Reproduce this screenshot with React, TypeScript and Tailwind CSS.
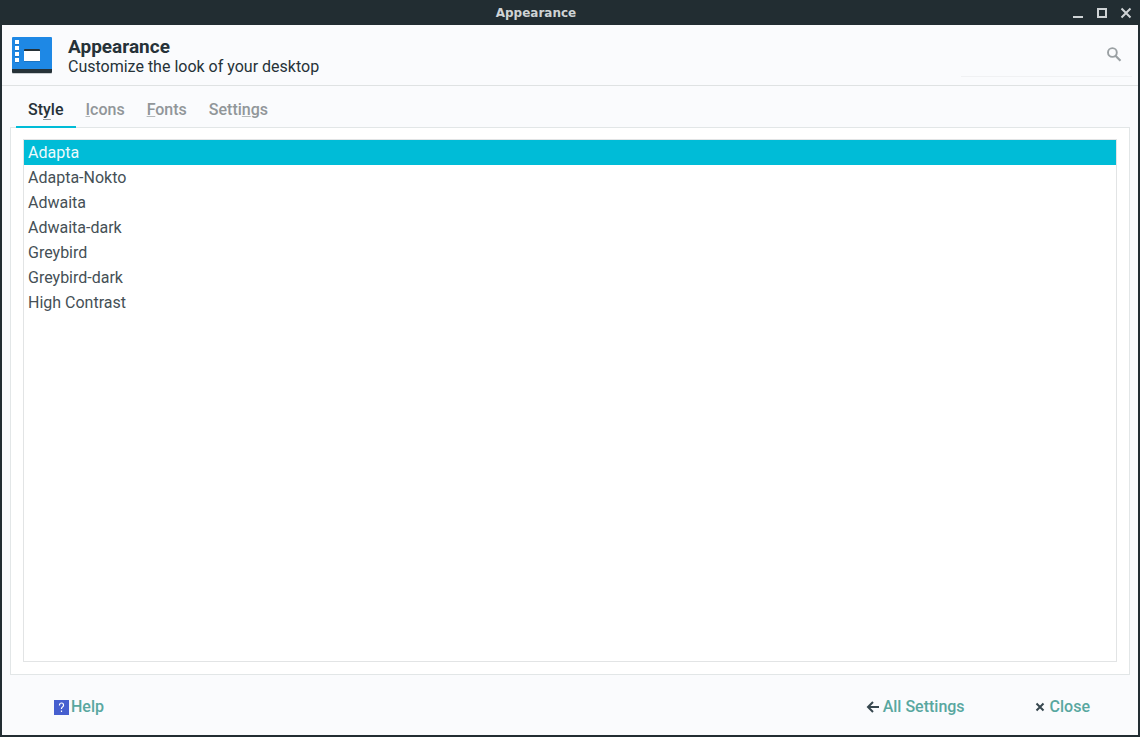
import React, { useState } from 'react';

const tabs = [
  { id: 'style', before: 'St', key: 'y', after: 'le' },
  { id: 'icons', before: '', key: 'I', after: 'cons' },
  { id: 'fonts', before: '', key: 'F', after: 'onts' },
  { id: 'settings', before: 'Setti', key: 'n', after: 'gs' },
];

const themes = [
  'Adapta',
  'Adapta-Nokto',
  'Adwaita',
  'Adwaita-dark',
  'Greybird',
  'Greybird-dark',
  'High Contrast',
];

function TitleBar() {
  return (
    <div className="grid h-[25px] shrink-0 grid-cols-[1fr_auto_1fr] items-center bg-[#222d32] px-1.5 text-[#cfd3d5]">
      <span />
      <span className="pt-px pr-[68px] font-['DejaVu_Sans'] text-[12px] leading-6 font-bold">Appearance</span>
      <div className="flex justify-end gap-2">
        <button type="button" aria-label="Minimize" className="size-4">
          <svg viewBox="0 0 16 16" className="size-4" shapeRendering="crispEdges">
            <rect x="3" y="11" width="10" height="2" fill="currentColor" />
          </svg>
        </button>
        <button type="button" aria-label="Maximize" className="size-4">
          <svg viewBox="0 0 16 16" className="size-4" shapeRendering="crispEdges">
            <path d="M3 3h10v10H3zM5 5v6h6V5z" fill="currentColor" fillRule="evenodd" />
          </svg>
        </button>
        <button type="button" aria-label="Close window" className="size-4">
          <svg viewBox="0 0 16 16" className="size-4">
            <path d="M3.5 3.5l9 9M12.5 3.5l-9 9" stroke="currentColor" strokeWidth="2" />
          </svg>
        </button>
      </div>
    </div>
  );
}

function AppearanceIcon() {
  return (
    <svg viewBox="0 0 40 37" width="40" height="37" aria-hidden="true">
      <rect x="0" y="3" width="40" height="34" rx="1" fill="#c9cdd0" />
      <rect x="0" y="2" width="40" height="34" rx="1" fill="#263238" />
      <path d="M1 0h38a1 1 0 0 1 1 1v31H0V1a1 1 0 0 1 1-1z" fill="#1e88e5" />
      <path d="M3 4h4v4H3zM3 10h4v4H3zM3 16h4v4H3zM3 22h4v4H3z" fill="#1a74c4" />
      <path d="M3 3h4v4H3zM3 9h4v4H3zM3 15h4v4H3zM3 21h4v4H3z" fill="#fff" />
      <rect x="12" y="13" width="16" height="12" fill="#1a74c4" />
      <rect x="12" y="12" width="16" height="3" rx="1" fill="#263238" />
      <rect x="12" y="14" width="16" height="10" fill="#fff" />
    </svg>
  );
}

function Header() {
  return (
    <header className="flex h-[61px] shrink-0 items-center border-b border-[#dfe2e3] pr-1.5 pl-2.5">
      <AppearanceIcon />
      <div className="ml-4 pt-[3px]">
        <h1 className="text-[19px] leading-5 font-bold">Appearance</h1>
        <p className="leading-5">Customize the look of your desktop</p>
      </div>
      <label className="mb-2 ml-auto flex h-11 w-[171px] items-center self-end border-b border-[#f0f1f3] pr-2.5">
        <input type="text" aria-label="Search" className="min-w-0 flex-1 bg-transparent outline-none" />
        <svg viewBox="0 0 16 16" className="size-4 text-[#9aa0a3]">
          <circle cx="6.4" cy="5.5" r="4.4" fill="none" stroke="currentColor" strokeWidth="1.9" />
          <path d="M9.5 8.7l5 5" stroke="currentColor" strokeWidth="2.2" />
        </svg>
      </label>
    </header>
  );
}

function Footer() {
  return (
    <footer className="flex h-[60px] shrink-0 items-center px-12 pt-[3px] font-medium text-[#58a7a0]">
      <button type="button" className="flex items-center gap-0.5 px-1">
        <svg viewBox="0 0 15 15" width="15" height="15" className="mt-px">
          <rect width="15" height="15" fill="#465fcf" />
          <path
            d="M5.5 5.5V5a2 2 0 0 1 4 0v.5c0 1.2-2 1.6-2 3V9M7.5 10.5V12"
            fill="none"
            stroke="#fff"
            strokeWidth="1.2"
          />
        </svg>
        Help
      </button>
      <button type="button" className="ml-auto flex items-center gap-0.5">
        <svg viewBox="0 0 16 16" className="mt-px size-4 text-[#37474f]">
          <path d="M14 8H3M8 3L3 8l5 5" fill="none" stroke="currentColor" strokeWidth="2" />
        </svg>
        All Settings
      </button>
      <button type="button" className="ml-[67px] flex items-center gap-0.5">
        <svg viewBox="0 0 16 16" className="mt-px size-4 text-[#37474f]">
          <path d="M4.5 4.5l7 7M11.5 4.5l-7 7" stroke="currentColor" strokeWidth="2" />
        </svg>
        Close
      </button>
    </footer>
  );
}

export default function App() {
  const [tab, setTab] = useState('style');
  const [theme, setTheme] = useState('Adapta');

  return (
    <div className="flex min-h-screen flex-col rounded-t-[2px] bg-[#222d32] font-[Roboto,sans-serif] text-[16px] text-[#263238]">
      <TitleBar />
      <div className="mx-0.5 mb-0.5 flex flex-1 flex-col bg-[#fafbfd]">
        <Header />
        <main className="flex flex-1 flex-col px-2">
          <div role="tablist" className="z-10 -mb-px flex h-[42px] -space-x-0.5 px-1.5">
            {tabs.map((t) => (
              <button
                key={t.id}
                type="button"
                role="tab"
                aria-selected={tab === t.id}
                onClick={() => setTab(t.id)}
                className={
                  tab === t.id
                    ? 'border-b-2 border-[#00bcd7] px-3 pt-2 font-medium text-[#263238]'
                    : 'border-b-2 border-transparent px-3 pt-2 font-medium text-[#919699]'
                }
              >
                {t.before}
                <span
                  className={
                    t.key === 'y'
                      ? 'underline decoration-[#919699] decoration-1 underline-offset-4 [text-decoration-skip-ink:none]'
                      : 'underline decoration-[#b5b9bb] decoration-1 underline-offset-1 [text-decoration-skip-ink:none]'
                  }
                >
                  {t.key}
                </span>
                {t.after}
              </button>
            ))}
          </div>
          <div role="tabpanel" className="flex flex-1 flex-col border border-[#e2e6e7] bg-white p-3 pt-[11px]">
            <ul role="listbox" aria-label="Style" className="flex-1 border border-[#e2e4e5]">
              {themes.map((name) => (
                <li key={name} role="option" aria-selected={theme === name}>
                  <button
                    type="button"
                    onClick={() => setTheme(name)}
                    className={
                      theme === name
                        ? 'block w-full bg-[#00bcd7] px-1 text-left leading-[25px] text-[#eefafc]'
                        : 'block w-full px-1 text-left leading-[25px] text-[#455056]'
                    }
                  >
                    {name}
                  </button>
                </li>
              ))}
            </ul>
          </div>
        </main>
        <Footer />
      </div>
    </div>
  );
}
